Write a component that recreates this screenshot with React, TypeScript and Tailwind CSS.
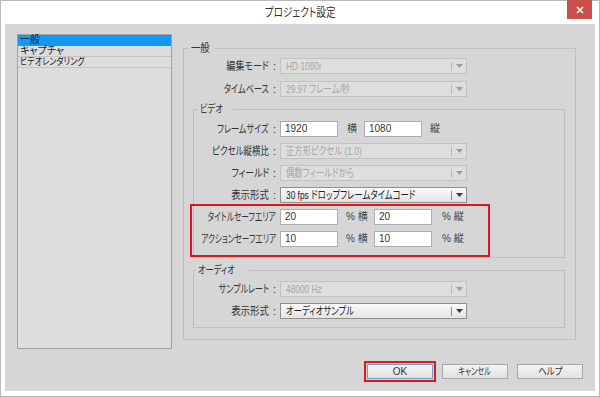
import React from "react";

const FONT =
  "font-['Liberation_Sans','Noto_Sans_CJK_JP',sans-serif] [font-feature-settings:'palt']";

function Arrow({ dark }: { dark?: boolean }) {
  return (
    <svg width="7" height="4" viewBox="0 0 7 4" className="block">
      <path d="M0 0 H7 L3.5 4 Z" fill={dark ? "#3a3a3a" : "#9a9a9a"} />
    </svg>
  );
}

function Select({ value, disabled }: { value: string; disabled?: boolean }) {
  return (
    <div
      className={
        disabled
          ? "flex h-[16px] w-[187px] items-center border border-[#c2c2c2] bg-[#dedede]"
          : "flex h-[16px] w-[187px] items-center border border-[#8e8e8e] bg-gradient-to-b from-[#fbfbfb] to-[#e4e4e4]"
      }
    >
      <span
        className={
          disabled
            ? "flex-1 overflow-hidden whitespace-nowrap pl-[5px] text-[11px] leading-[14px] text-[#a6a6a6]"
            : "flex-1 overflow-hidden whitespace-nowrap pl-[5px] text-[11px] leading-[14px] text-[#222]"
        }
      >
        <span className="inline-block origin-left scale-x-[0.76]">{value}</span>
      </span>
      <span
        className={
          disabled ? "h-[9px] w-px bg-[#b8b8b8]" : "h-[9px] w-px bg-[#8a8a8a]"
        }
      />
      <span className="flex w-[14px] items-center justify-center">
        <Arrow dark={!disabled} />
      </span>
    </div>
  );
}

function Input({ value }: { value: string }) {
  return (
    <div className="h-[16px] w-[58px] border border-[#adadad] bg-white pl-[4px] text-[10px] leading-[14px] text-[#333]">
      {value}
    </div>
  );
}

function Row({
  label,
  colon,
  lw,
  sc,
  children,
}: {
  label: string;
  colon?: boolean;
  lw: "outer" | "inner";
  sc: string;
  children: React.ReactNode;
}) {
  return (
    <div className="flex h-[16px] items-center">
      <div
        className={
          lw === "outer"
            ? "flex w-[92px] shrink-0 justify-end whitespace-nowrap text-[11px] leading-[14px] text-[#333]"
            : "flex w-[82px] shrink-0 justify-end whitespace-nowrap text-[11px] leading-[14px] text-[#333]"
        }
      >
        <span className={"inline-block shrink-0 origin-right " + sc}>{label}</span>
        {colon && <span className="ml-[4px] shrink-0">:</span>}
      </div>
      <div className="ml-[4px] flex items-center">{children}</div>
    </div>
  );
}

function Unit({ text, w }: { text: string; w: string }) {
  return (
    <span
      className={"whitespace-nowrap text-[10px] leading-[14px] text-[#444] " + w}
    >
      {text}
    </span>
  );
}

function Button({
  label,
  focused,
  sc,
}: {
  label: string;
  focused?: boolean;
  sc: string;
}) {
  return (
    <div
      className={
        focused
          ? "flex h-[15px] w-[66px] items-center justify-center border border-[#6f9fc7] bg-gradient-to-b from-[#f3f3f3] to-[#e2e2e2] text-[10px] leading-[12px] text-[#333]"
          : "flex h-[15px] w-[66px] items-center justify-center border border-[#a8a8a8] bg-gradient-to-b from-[#f3f3f3] to-[#e2e2e2] text-[10px] leading-[12px] text-[#333]"
      }
    >
      <span className={"inline-block whitespace-nowrap " + sc}>{label}</span>
    </div>
  );
}

export default function App() {
  return (
    <div
      className={
        "flex h-[397px] w-[600px] flex-col border border-[#b9b9b9] bg-white " +
        FONT
      }
    >
      {/* title bar */}
      <div className="relative flex h-[23px] shrink-0 items-center justify-center">
        <span className="inline-block scale-x-[0.8] whitespace-nowrap text-[12px] leading-[16px] text-[#333]">
          プロジェクト設定
        </span>
        <div className="absolute right-[7px] top-[-1px] flex h-[19px] w-[25px] items-center justify-center bg-[#c7504d]">
          <svg width="8" height="8" viewBox="0 0 8 8">
            <path d="M1 1 L7 7 M7 1 L1 7" stroke="white" strokeWidth="1.6" />
          </svg>
        </div>
      </div>

      {/* body */}
      <div className="mx-[4px] mb-[5px] flex flex-1 flex-col bg-[#d6d6d6]">
        <div className="flex pl-[12px] pt-[10px]">
          {/* list */}
          <div className="flex h-[315px] w-[155px] shrink-0 flex-col border border-[#a0a0a0] bg-[#dddddd] text-[10px] leading-[10px] text-[#222]">
            <div className="h-[11px] bg-[#1199f5] pl-[2px]">一般</div>
            <div className="h-[11px] border-b border-[#c4c4c4] pl-[2px]">
              キャプチャ
            </div>
            <div className="h-[11px] overflow-hidden whitespace-nowrap border-b border-[#c4c4c4] pl-[2px]">
              <span className="inline-block origin-left scale-x-[0.8]">
                ビデオレンダリング
              </span>
            </div>
          </div>

          {/* right settings */}
          <fieldset className="ml-[11px] mt-[7px] h-[299px] w-[393px] border border-[#bfbfbf] pl-[9px] pr-[10px]">
            <legend className="-ml-[4px] px-[2px] text-[11px] leading-[14px] text-[#333]">
              <span className="inline-block origin-left scale-x-[0.85]">一般</span>
            </legend>
            <div className="-ml-[9px] flex flex-col gap-[7px] pt-[3px]">
              <Row label="編集モード" colon lw="outer" sc="scale-x-[0.82]">
                <Select value="HD 1080i" disabled />
              </Row>
              <Row label="タイムベース" colon lw="outer" sc="scale-x-[0.74]">
                <Select value="29.97 フレーム/秒" disabled />
              </Row>
            </div>

            <fieldset className="mt-[5px] border border-[#bfbfbf] pb-[10px]">
              <legend className="ml-[4px] px-[2px] text-[11px] leading-[14px] text-[#333]">
                <span className="inline-block origin-left scale-x-[0.75]">ビデオ</span>
              </legend>
              <div className="flex flex-col gap-[6px] pt-[5px]">
                <Row label="フレームサイズ" colon lw="inner" sc="scale-x-[0.74]">
                  <Input value="1920" />
                  <Unit text="横" w="ml-[9px] w-[17px]" />
                  <Input value="1080" />
                  <Unit text="縦" w="ml-[8px]" />
                </Row>
                <Row label="ピクセル縦横比" colon lw="inner" sc="scale-x-[0.77]">
                  <Select value="正方形ピクセル (1.0)" disabled />
                </Row>
                <Row label="フィールド" colon lw="inner" sc="scale-x-[0.8]">
                  <Select value="偶数フィールドから" disabled />
                </Row>
                <Row label="表示形式" colon lw="inner" sc="scale-x-[0.86]">
                  <Select value="30 fps ドロップフレームタイムコード" />
                </Row>
                <div className="relative flex flex-col gap-[6px]">
                  <Row label="タイトルセーフエリア" lw="inner" sc="scale-x-[0.7]">
                    <Input value="20" />
                    <Unit text="% 横" w="ml-[8px] w-[28px]" />
                    <Input value="20" />
                    <Unit text="% 縦" w="ml-[10px]" />
                  </Row>
                  <Row label="アクションセーフエリア" lw="inner" sc="scale-x-[0.7]">
                    <Input value="10" />
                    <Unit text="% 横" w="ml-[8px] w-[28px]" />
                    <Input value="10" />
                    <Unit text="% 縦" w="ml-[10px]" />
                  </Row>
                  <div className="pointer-events-none absolute -bottom-[10px] -left-[4px] -top-[5px] w-[300px] border-2 border-[#e0151b]" />
                </div>
              </div>
            </fieldset>

            <fieldset className="mt-[5px] border border-[#bfbfbf] pb-[8px]">
              <legend className="ml-[2px] px-[2px] text-[11px] leading-[14px] text-[#333]">
                <span className="inline-block origin-left scale-x-[0.75]">オーディオ</span>
              </legend>
              <div className="flex flex-col gap-[6px] pt-[4px]">
                <Row label="サンプルレート" colon lw="inner" sc="scale-x-[0.73]">
                  <Select value="48000 Hz" disabled />
                </Row>
                <Row label="表示形式" colon lw="inner" sc="scale-x-[0.86]">
                  <Select value="オーディオサンプル" />
                </Row>
              </div>
            </fieldset>
          </fieldset>
        </div>

        {/* buttons */}
        <div className="mr-[12px] mt-[15px] flex justify-end gap-[9px]">
          <div className="relative">
            <Button label="OK" focused sc="" />
            <div className="pointer-events-none absolute -bottom-[3px] -left-[3px] -right-[3px] -top-[3px] border-2 border-[#e0151b]" />
          </div>
          <Button label="キャンセル" sc="scale-x-[0.72]" />
          <Button label="ヘルプ" sc="scale-x-[0.85]" />
        </div>
      </div>
    </div>
  );
}
